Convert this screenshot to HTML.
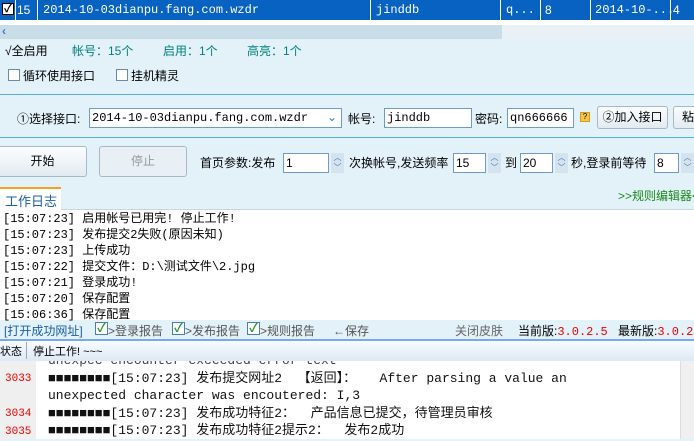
<html><head><style>
*{margin:0;padding:0;box-sizing:border-box}
body{width:694px;height:439px;overflow:hidden;background:#e3f1f9;font-family:"Liberation Sans","Noto Sans CJK SC",sans-serif;font-size:12px;color:#000;position:relative}
.a{position:absolute;white-space:nowrap}
.m{font-family:"Liberation Mono","Noto Sans CJK SC",monospace}
.inp{position:absolute;background:#fff;border:1px solid #6d9ccc;height:20px;padding:1px 2px;font-size:12px;line-height:16px}
.btn{position:absolute;border:1px solid #a8b8c4;border-radius:3px;background:linear-gradient(#fbfdfe,#e2ebf1);text-align:center}
.sp{position:absolute;width:13px;height:20px;background:#d4e3ee;color:#3a7cc0;font-size:8px;line-height:10px;text-align:center}
.cb{position:absolute;width:12px;height:12px;border:1px solid #6a8aa8;background:#fff}
.gc{position:absolute;width:13px;height:13px;border:1px solid #4a7cad;background:#fff;color:#2a9a2a;font-size:12px;line-height:11px;text-align:center;font-weight:bold}
</style></head><body>
<div class="a" style="left:0;top:0;width:694px;height:20px;background:#0862c2"></div>
<div class="a" style="left:2px;top:3px;width:12px;height:12px;background:#fff;border:1px solid #000;font-size:11px;line-height:10px;text-align:center;font-weight:bold">✓</div>
<div class="a" style="left:15px;top:0;width:1px;height:20px;background:#fff"></div>
<div class="a" style="left:17px;top:3px;color:#fff">15</div>
<div class="a" style="left:37px;top:0;width:1px;height:20px;background:#fff"></div>
<div class="a m" style="left:43px;top:3px;color:#fff">2014-10-03dianpu.fang.com.wzdr</div>
<div class="a" style="left:370px;top:0;width:1px;height:20px;background:#fff"></div>
<div class="a m" style="left:376px;top:3px;color:#fff">jinddb</div>
<div class="a" style="left:500px;top:0;width:1px;height:20px;background:#fff"></div>
<div class="a m" style="left:506px;top:3px;color:#fff">q...</div>
<div class="a" style="left:540px;top:0;width:1px;height:20px;background:#fff"></div>
<div class="a" style="left:545px;top:3px;color:#fff">8</div>
<div class="a" style="left:590px;top:0;width:1px;height:20px;background:#fff"></div>
<div class="a m" style="left:595px;top:3px;color:#fff">2014-10-...</div>
<div class="a" style="left:670px;top:0;width:1px;height:20px;background:#fff"></div>
<div class="a" style="left:673px;top:3px;color:#fff">4</div>
<div class="a" style="left:0;top:20px;width:694px;height:5px;background:#fff"></div>
<div class="a" style="left:0;top:25px;width:502px;height:14px;background:#c9dde9"></div>
<div class="a" style="left:502px;top:25px;width:192px;height:14px;background:#eaf1f6"></div>
<div class="a" style="left:2px;top:24px;color:#3a7cc0;font-weight:bold">‹</div>
<div class="a" style="left:5px;top:42px">√全启用</div>
<div class="a" style="left:72px;top:42px;color:#00807a">帐号：15个</div>
<div class="a" style="left:163px;top:42px;color:#00807a">启用：1个</div>
<div class="a" style="left:247px;top:42px;color:#00807a">高亮：1个</div>
<div class="cb" style="left:8px;top:69px"></div><div class="a" style="left:23px;top:67px">循环使用接口</div>
<div class="cb" style="left:116px;top:69px"></div><div class="a" style="left:131px;top:67px">挂机精灵</div>
<div class="a" style="left:0;top:94px;width:694px;height:1px;background:#5aaee0"></div>
<div class="a" style="left:17px;top:110px">①选择接口:</div>
<div class="inp m" style="left:89px;top:108px;width:253px">2014-10-03dianpu.fang.com.wzdr<span style="position:absolute;right:4px;color:#3a7cc0">⌄</span></div>
<div class="a" style="left:348px;top:110px">帐号:</div>
<div class="inp m" style="left:384px;top:108px;width:88px">jinddb</div>
<div class="a" style="left:475px;top:110px">密码:</div>
<div class="inp m" style="left:507px;top:108px;width:67px">qn666666</div>
<div class="a" style="left:580px;top:112px;width:10px;height:10px;background:#f7c640;border:1px solid #d09a20;font-size:8px;line-height:8px;text-align:center">?</div>
<div class="btn" style="left:597px;top:106px;width:71px;height:23px;line-height:21px">②加入接口</div>
<div class="btn" style="left:673px;top:106px;width:30px;height:23px;line-height:21px;text-align:left;padding-left:8px">粘</div>
<div class="a" style="left:0;top:137px;width:694px;height:1px;background:#5aaee0"></div>
<div class="btn" style="left:-2px;top:146px;width:89px;height:31px;line-height:29px">开始</div>
<div class="btn" style="left:99px;top:146px;width:88px;height:31px;line-height:29px;color:#999;background:#e8f0f5">停止</div>
<div class="a" style="left:200px;top:154px">首页参数:发布</div>
<div class="inp" style="left:283px;top:153px;width:46px">1</div><div class="sp" style="left:331px;top:153px">︿<br>﹀</div>
<div class="a" style="left:349px;top:154px">次换帐号,发送频率</div>
<div class="inp" style="left:453px;top:153px;width:33px">15</div><div class="sp" style="left:488px;top:153px">︿<br>﹀</div>
<div class="a" style="left:505px;top:154px">到</div>
<div class="inp" style="left:520px;top:153px;width:33px">20</div><div class="sp" style="left:555px;top:153px">︿<br>﹀</div>
<div class="a" style="left:571px;top:154px">秒,登录前等待</div>
<div class="inp" style="left:654px;top:153px;width:25px">8</div><div class="sp" style="left:681px;top:153px">︿<br>﹀</div>
<div class="a" style="left:0;top:187px;width:61px;height:23px;background:#fff;border-top:2px solid #f5a020"></div>
<div class="a" style="left:5px;top:191px;color:#1a5ea8;font-size:13px">工作日志</div>
<div class="a" style="left:618px;top:187px;color:#1a8a1a">&gt;&gt;规则编辑器&lt;</div>
<div class="a" style="left:61px;top:209px;width:633px;height:1px;background:#c8d8e2"></div>
<div class="a" style="left:0;top:210px;width:694px;height:110px;background:#fff"></div>
<div class="a m" style="left:3px;top:211px;line-height:16px;font-size:12px">[15:07:23] 启用帐号已用完! 停止工作!<br>[15:07:23] 发布提交2失败(原因未知)<br>[15:07:23] 上传成功<br>[15:07:22] 提交文件：D:\测试文件\2.jpg<br>[15:07:21] 登录成功!<br>[15:07:20] 保存配置<br>[15:06:36] 保存配置</div>
<div class="a" style="left:4px;top:322px;color:#1a5ea8">[打开成功网址]</div>
<div class="gc" style="left:95px;top:322px">✓</div><div class="a" style="left:108px;top:322px;color:#555">&gt;登录报告</div>
<div class="gc" style="left:172px;top:322px">✓</div><div class="a" style="left:185px;top:322px;color:#555">&gt;发布报告</div>
<div class="gc" style="left:247px;top:322px">✓</div><div class="a" style="left:260px;top:322px;color:#555">&gt;规则报告</div>
<div class="a" style="left:333px;top:322px;color:#555">←保存</div>
<div class="a" style="left:455px;top:322px;color:#666">关闭皮肤</div>
<div class="a" style="left:518px;top:322px">当前版:<span class="m" style="color:#e00">3.0.2.5</span></div>
<div class="a" style="left:618px;top:322px">最新版:<span class="m" style="color:#e00">3.0.2</span></div>
<div class="a" style="left:0;top:339px;width:694px;height:2px;background:#7aa8e8"></div>
<div class="a" style="left:0;top:341px;width:694px;height:20px;background:linear-gradient(#f8fbff,#dde9f5)"></div>
<div class="a" style="left:0;top:343px;font-size:11px">状态</div>
<div class="a" style="left:26px;top:342px;width:1px;height:17px;background:#9ab"></div>
<div class="a" style="left:33px;top:343px;font-size:11px">停止工作! ~~~</div>
<div class="a" style="left:0;top:361px;width:694px;height:78px;background:#fff"></div>
<div class="a" style="left:0;top:361px;width:36px;height:78px;background:#efefef"></div>
<div class="a" style="left:680px;top:361px;width:14px;height:78px;background:#f0f0f0;border-left:1px solid #ddd"></div>
<div class="a m" style="left:5px;top:371px;color:#e00;font-size:11px;line-height:17.5px">3033<br><br>3034<br>3035</div>
<div class="a" style="left:0;top:361px;width:680px;height:80px;overflow:hidden">
<div class="a m" style="left:48px;top:-9px;line-height:17.5px;font-size:13px;color:#111"><span style="color:#444">unexpec encounter exceeded error text</span><br>■■■■■■■■[15:07:23] 发布提交网址2 &nbsp;【返回】： &nbsp;&nbsp;After parsing a value an<br>unexpected character was encoutered: I,3<br>■■■■■■■■[15:07:23] 发布成功特征2： &nbsp;产品信息已提交，待管理员审核<br>■■■■■■■■[15:07:23] 发布成功特征2提示2： &nbsp;发布2成功</div>
</div>
</body></html>
